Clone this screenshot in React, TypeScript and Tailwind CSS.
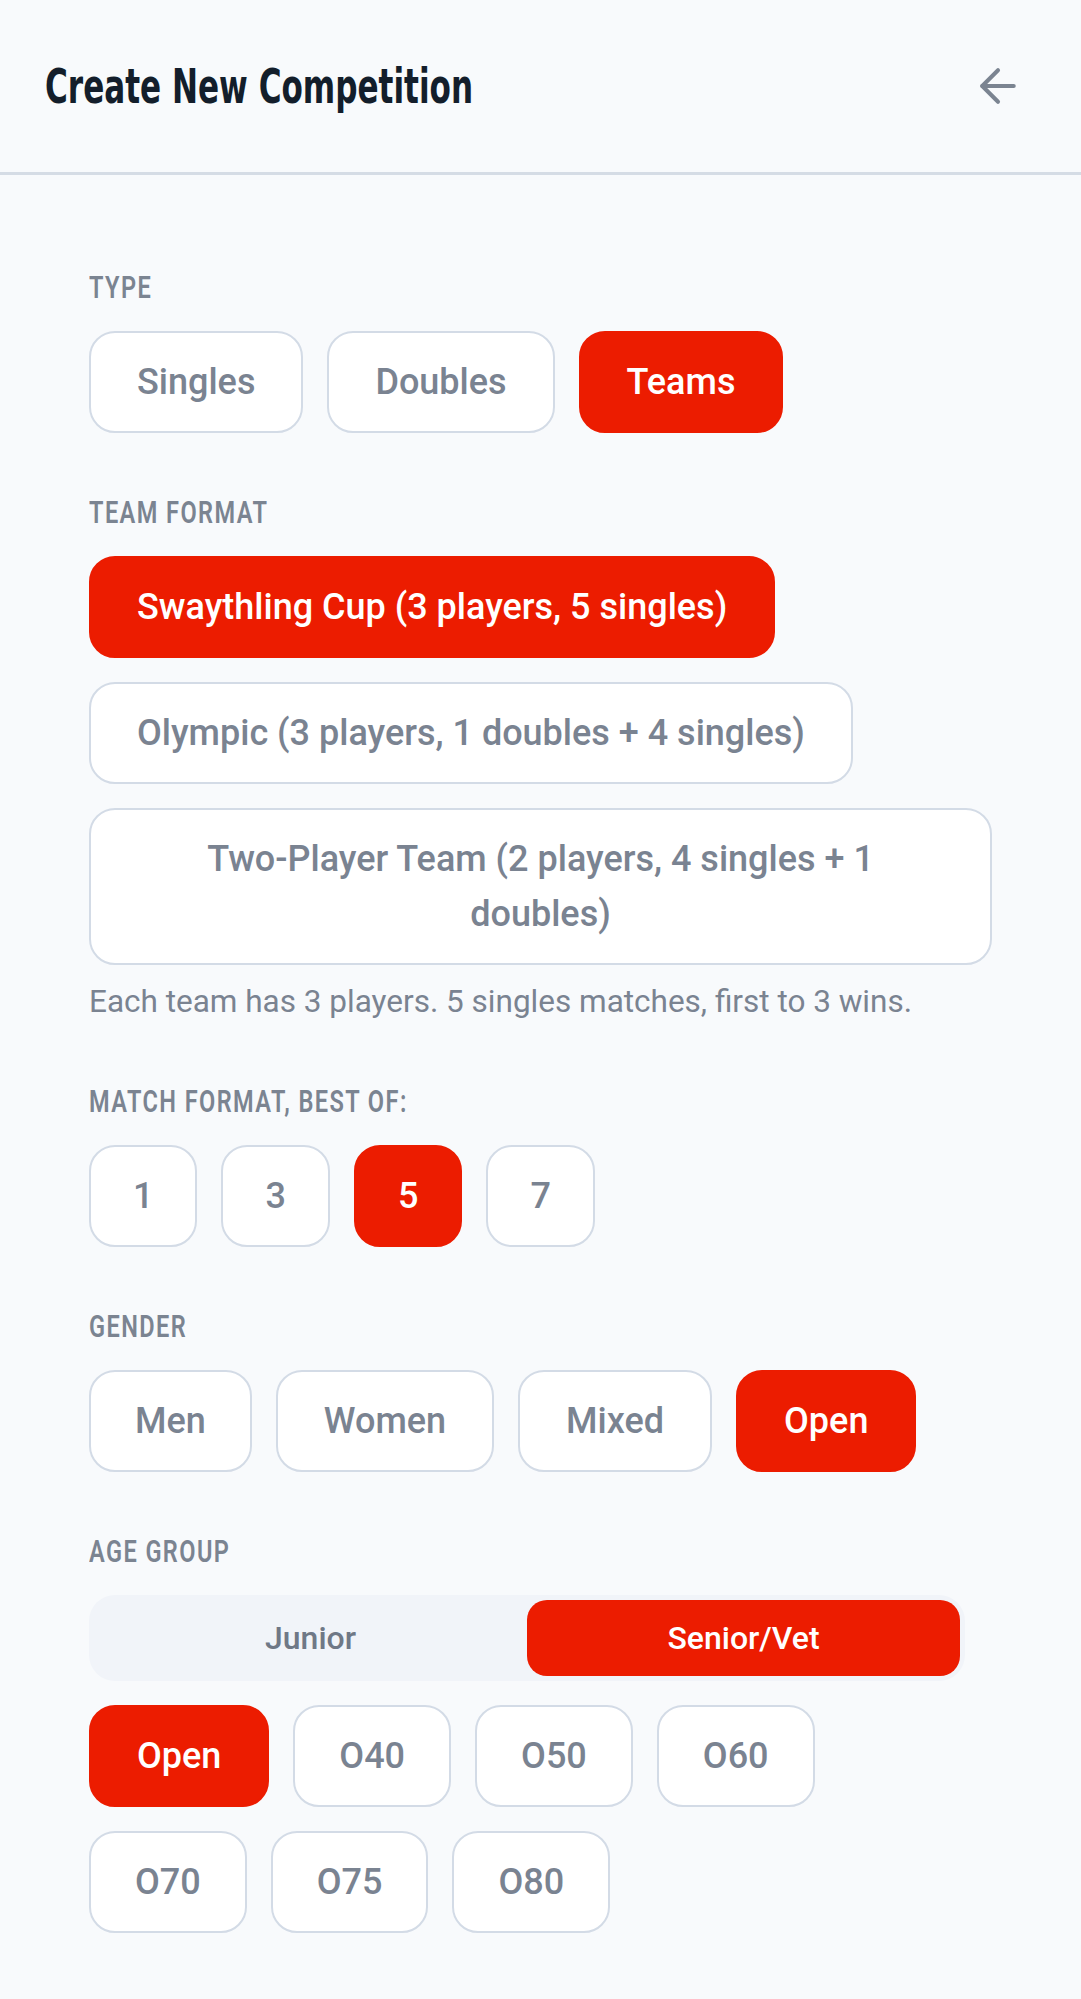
import { ArrowLeft } from "lucide-react"

const RED = "bg-[#ec1c00] border-[#ec1c00] text-white"
const IDLE = "bg-white border-[#d3dbe6] text-[#7a8391]"

function Label({ children }: { children: string }) {
  return (
    <div className="h-[32px] leading-[32px] mb-[27px] whitespace-nowrap">
      <span className="inline-block origin-left scale-x-[0.76] font-['Roboto',sans-serif] font-semibold text-[31px] tracking-[0.06em] text-[#7b8491]">
        {children}
      </span>
    </div>
  )
}

function Chip({
  children,
  active,
  wide,
  pad = "px-[46px]"
}: {
  children: string
  active?: boolean
  wide?: boolean
  pad?: string
}) {
  return (
    <button
      className={`${active ? RED : IDLE} ${wide ? "text-center" : "whitespace-nowrap"} ${pad} border-2 rounded-[26px] py-[21.5px] text-[36px] leading-[55px] font-medium font-['Roboto',sans-serif]`}
    >
      {children}
    </button>
  )
}

export default function App() {
  return (
    <div className="min-h-screen bg-[#f8fafc] font-['Roboto',sans-serif]">
      <header className="h-[175px] flex items-center justify-between pl-[45px] pr-[56px] border-b-[3px] border-[#d5dce5]">
        <h1 className="whitespace-nowrap">
          <span className="inline-block origin-left scale-x-[0.72] font-['DejaVu_Sans_Condensed','DejaVu_Sans',sans-serif] font-bold text-[48px] text-[#131e2b]">
            Create New Competition
          </span>
        </h1>
        <ArrowLeft size={54} strokeWidth={1.8} className="text-[#7b8491]" />
      </header>

      <main className="px-[89px] pt-[97px] pb-16 flex flex-col gap-[64px]">
        <section>
          <Label>TYPE</Label>
          <div className="flex gap-6">
            <Chip>Singles</Chip>
            <Chip>Doubles</Chip>
            <Chip active>Teams</Chip>
          </div>
        </section>

        <section>
          <Label>TEAM FORMAT</Label>
          <div className="flex flex-col items-start gap-6">
            <Chip active>Swaythling Cup (3 players, 5 singles)</Chip>
            <Chip>Olympic (3 players, 1 doubles + 4 singles)</Chip>
            <Chip wide>Two-Player Team (2 players, 4 singles + 1 doubles)</Chip>
          </div>
          <p className="mt-[17px] text-[31.5px] leading-[40px] text-[#7a8391]">
            Each team has 3 players. 5 singles matches, first to 3 wins.
          </p>
        </section>

        <section>
          <Label>MATCH FORMAT, BEST OF:</Label>
          <div className="flex gap-6">
            <Chip pad="px-[42px]">1</Chip>
            <Chip pad="px-[42px]">3</Chip>
            <Chip pad="px-[42px]" active>5</Chip>
            <Chip pad="px-[42px]">7</Chip>
          </div>
        </section>

        <section>
          <Label>GENDER</Label>
          <div className="flex gap-6">
            <Chip pad="px-[44px]">Men</Chip>
            <Chip>Women</Chip>
            <Chip>Mixed</Chip>
            <Chip active>Open</Chip>
          </div>
        </section>

        <section>
          <Label>AGE GROUP</Label>
          <div className="w-[876px] h-[86px] p-[5px] grid grid-cols-2 rounded-[26px] bg-[#f1f4f9]">
            <button className="rounded-[20px] text-[32px] font-medium text-[#6f7886]">Junior</button>
            <button className="rounded-[20px] text-[32px] font-medium bg-[#ec1c00] text-white">Senior/Vet</button>
          </div>
          <div className="mt-6 flex flex-wrap gap-6 w-[760px]">
            <Chip active>Open</Chip>
            <Chip pad="px-[44px]">O40</Chip>
            <Chip pad="px-[44px]">O50</Chip>
            <Chip pad="px-[44px]">O60</Chip>
            <Chip pad="px-[44px]">O70</Chip>
            <Chip pad="px-[44px]">O75</Chip>
            <Chip pad="px-[44px]">O80</Chip>
          </div>
        </section>
      </main>
    </div>
  )
}
